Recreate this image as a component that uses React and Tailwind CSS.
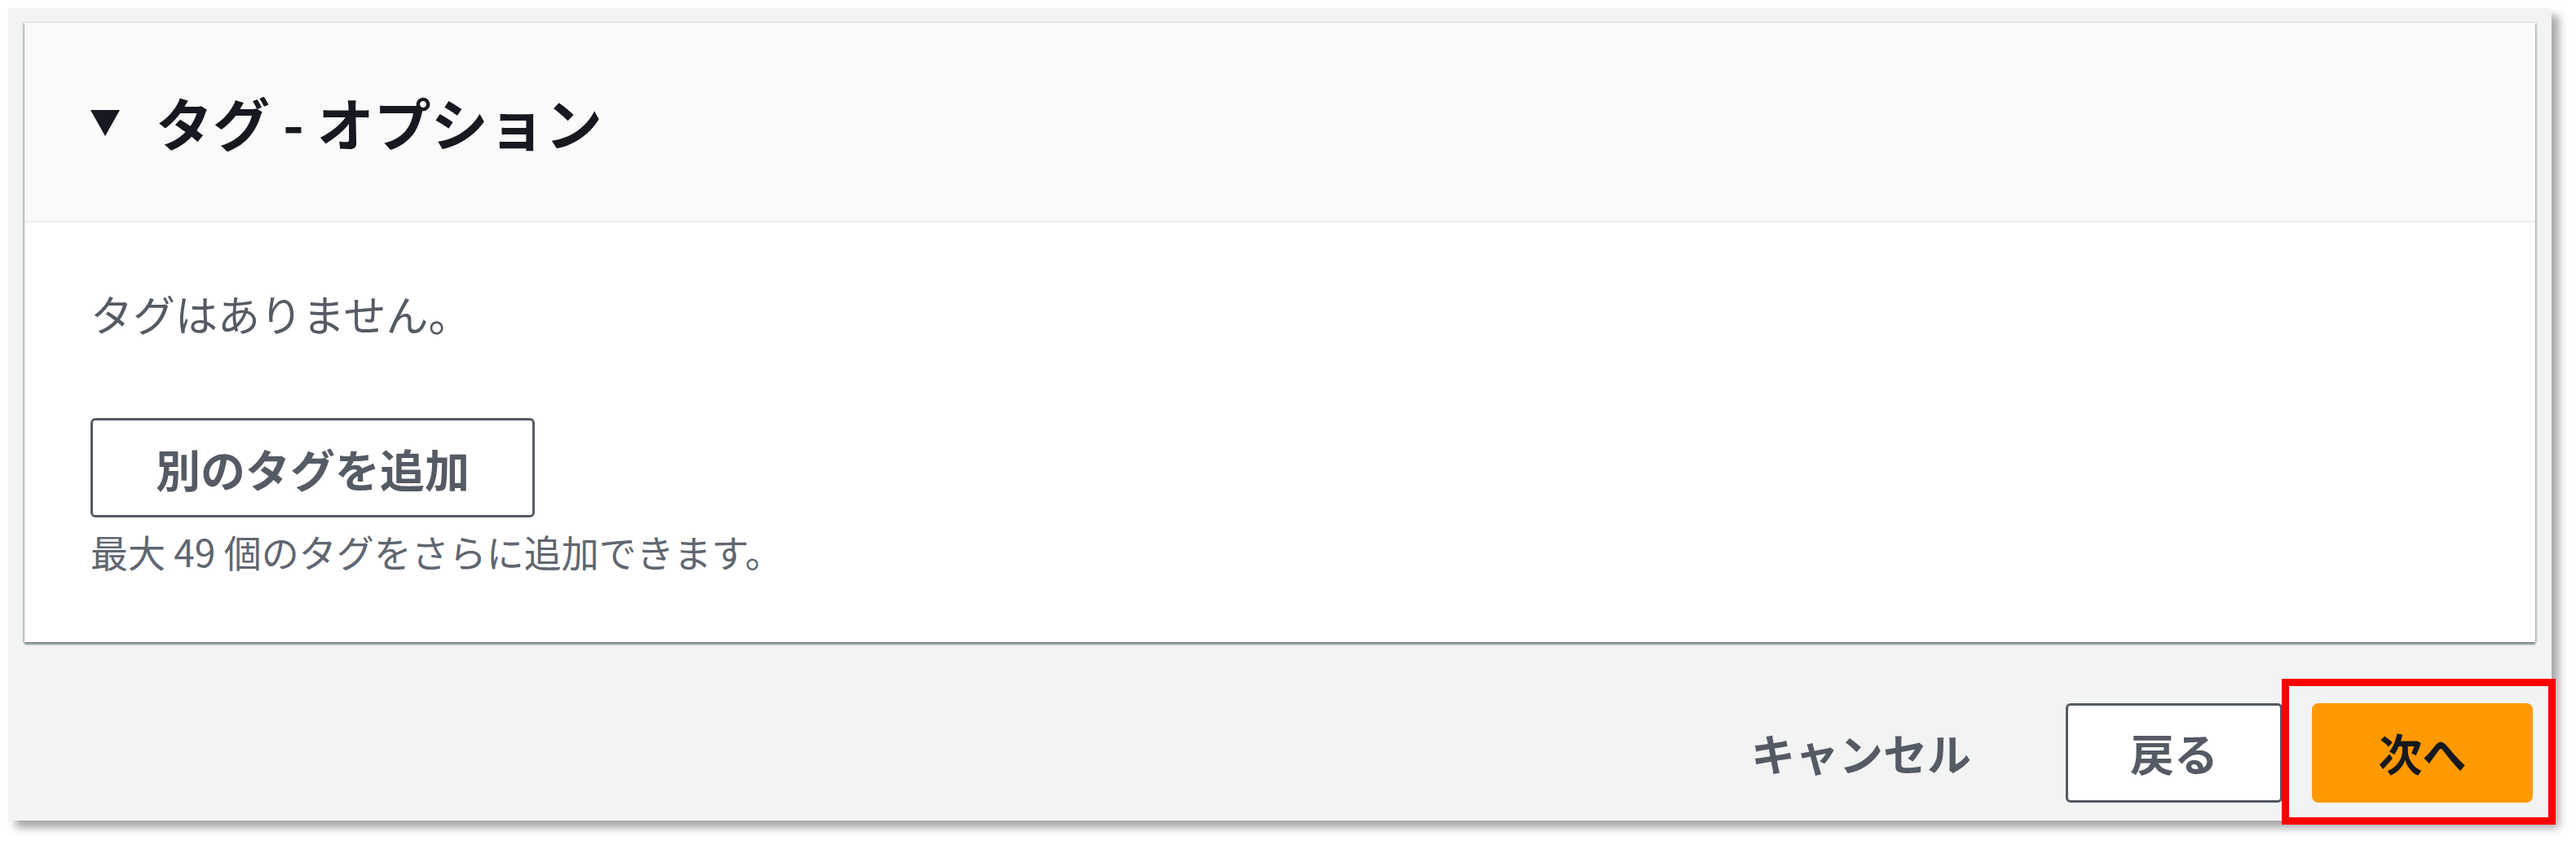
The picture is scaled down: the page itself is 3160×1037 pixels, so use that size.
export default function App() {
  const jp = { fontFamily: '"Noto Sans CJK JP", "Noto Sans", sans-serif' };

  return (
    <div className="relative w-[3160px] h-[1037px] bg-white pt-[10px] pl-[10px]" style={jp}>
      <div className="w-[3120px] h-[997px] bg-[#f2f3f3] flex flex-col pt-[18px] px-[20px] shadow-[9px_9px_10px_rgba(0,0,0,0.35)]">
        <div className="bg-white shadow-[0_3px_2px_0_rgba(0,28,36,0.45),2px_0_2px_0_rgba(0,28,36,0.18),-2px_0_2px_0_rgba(0,28,36,0.18)]">
          <div className="h-[245px] bg-[#fafafa] border-b-2 border-[#eaeded] flex items-center pl-[81px] gap-[44px]">
            <svg width="36" height="32" viewBox="0 0 36 32" className="mt-[2px]">
              <polygon points="0,0 36,0 18,32" fill="#16191f" />
            </svg>
            <h2 className="text-[70px] font-bold text-[#16191f] leading-none">タグ - オプション</h2>
          </div>
          <div className="pl-[81px] pt-[78px] pb-[83px]">
            <p className="text-[52px] leading-[67px] text-[#545b64]">タグはありません。</p>
            <button className="mt-[95px] w-[545px] h-[122px] border-[3px] border-[#545b64] rounded-[6px] bg-white text-[55px] font-bold text-[#545b64] leading-none">
              別のタグを追加
            </button>
            <p className="mt-[12px] text-[46px] leading-[58px] text-[#5f6670]">最大 49 個のタグをさらに追加できます。</p>
          </div>
        </div>
        <div className="flex justify-end items-center gap-[36px] mt-[75px] pr-[3px]">
          <button className="text-[54px] font-bold text-[#545b64] mr-[80px] leading-none">キャンセル</button>
          <button className="w-[266px] h-[122px] border-[3px] border-[#545b64] rounded-[6px] bg-white text-[54px] font-bold text-[#545b64] leading-none">
            戻る
          </button>
          <button className="w-[271px] h-[122px] rounded-[8px] bg-[#ff9900] text-[54px] font-bold text-[#16191f] leading-none">
            次へ
          </button>
        </div>
      </div>
      <div className="absolute left-[2799px] top-[833px] w-[336px] h-[179px] border-[9px] border-[#ff0000]" />
    </div>
  );
}
